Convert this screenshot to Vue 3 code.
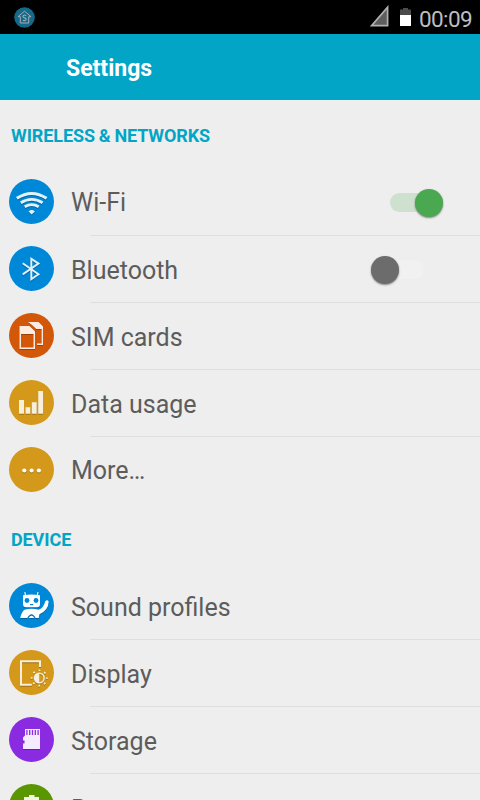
<script setup>
const sections = [
  {
    title: 'WIRELESS & NETWORKS',
    rows: [
      { label: 'Wi-Fi', icon: 'wifi', tone: 'blue', toggle: 'on', place: 'raised' },
      { label: 'Bluetooth', icon: 'bluetooth', tone: 'blue', toggle: 'off' },
      { label: 'SIM cards', icon: 'sim', tone: 'orange' },
      { label: 'Data usage', icon: 'data', tone: 'gold' },
      { label: 'More…', icon: 'more', tone: 'gold', place: 'raised' },
    ],
  },
  {
    title: 'DEVICE',
    rows: [
      { label: 'Sound profiles', icon: 'sound', tone: 'blue' },
      { label: 'Display', icon: 'display', tone: 'gold' },
      { label: 'Storage', icon: 'storage', tone: 'purple' },
      { label: 'Battery', icon: 'battery', tone: 'green', place: 'lowered' },
    ],
  },
]
</script>

<template>
  <div class="screen">
    <div class="status">
      <svg class="home" width="21" height="21" viewBox="0 0 21 21">
        <circle cx="10.5" cy="10.5" r="10.3" fill="#15698a" />
        <path d="M4 9.7 10.5 4.2 17 9.7H14.7V16H6.3V9.7Z" fill="none" stroke="#a3adb0" stroke-width="1" />
        <path d="M12.2 8.6Q10.5 7.4 9.3 8.6T10.5 10.8 11.8 13 9 13.2" fill="none" stroke="#a3adb0" stroke-width="1.1" />
      </svg>
      <span class="fill"></span>
      <svg class="signal" width="21" height="22" viewBox="0 0 21 22">
        <path d="M18.6 2.2V20.6H2.6Z" fill="#5e5e5e" stroke="#b0b0b0" stroke-width="1.7" />
      </svg>
      <svg class="cell" width="11" height="18" viewBox="0 0 11 18">
        <path d="M3 0H8V1.5H11V7H0V1.5H3Z" fill="#4b4b4b" />
        <path d="M0 7H11V18H0Z" fill="#fff" />
      </svg>
      <span class="clock">00:09</span>
    </div>
    <header class="bar">Settings</header>
    <section v-for="s in sections" :key="s.title">
      <h2>{{ s.title }}</h2>
      <div v-for="r in s.rows" :key="r.label" class="row">
        <svg class="icon" :class="r.tone" width="45" height="45" viewBox="0 0 45 45">
          <circle class="disc" cx="22.5" cy="22.5" r="22.5" />
          <g v-if="r.icon === 'wifi'" class="art" fill="none" stroke="#e3f1fa">
            <path d="M7.8 19.3Q22.7 9.6 37.6 19.3" stroke-width="3" />
            <path d="M11.8 23.8Q22.7 16.8 33.6 23.8" stroke-width="2.8" />
            <path d="M15.7 27.8Q22.7 23.3 29.7 27.8" stroke-width="2.8" />
            <path d="M19.6 32.4Q22.7 29.8 25.8 32.4L22.7 35.4Z" fill="#e3f1fa" stroke="none" />
          </g>
          <g v-else-if="r.icon === 'bluetooth'" class="art" fill="none" stroke="#e3f1fa">
            <path d="M13.7 17.2 29.5 28.2 22.3 33.2V12.8L29.5 17.6 13.7 28.4" stroke-width="1.9" />
          </g>
          <g v-else-if="r.icon === 'sim'" class="art" fill="#fdebe0">
            <path d="M19 9H29.5L34 13.5V32H28V30.5H32.6V16H27.2L23 12Z" />
            <path d="M20.6 11.5 26.8 17.5" fill="none" stroke="#d35708" stroke-width="1.2" />
            <path fill-rule="evenodd" d="M10.5 13H20.6L26 18.2V36H10.5ZM12 21V34.5H24.5V21Z" />
          </g>
          <g v-else-if="r.icon === 'data'" class="art" fill="#f7eedb">
            <path d="M10 20H15V33.7H10ZM16.5 27.3H21.3V33.7H16.5ZM22.8 22.3H27.7V33.7H22.8ZM29.2 11H34V33.7H29.2Z" />
          </g>
          <g v-else-if="r.icon === 'more'" class="art" fill="#fff">
            <circle cx="15.3" cy="23.5" r="2.1" />
            <circle cx="22.6" cy="23.5" r="2.1" />
            <circle cx="29.9" cy="23.5" r="2.1" />
          </g>
          <g v-else-if="r.icon === 'sound'" class="art" fill="#fff">
            <path d="M16.6 13 15.8 9.2M28.2 13 29 9.2" stroke="#fff" stroke-width="1.2" />
            <path d="M14 12.2Q22.5 11 31 12.2V21Q31 24.2 28 24.2H17Q14 24.2 14 21Z" />
            <path d="M11.2 35Q12.5 29 15.5 26.8 22.5 24.9 29.5 26.8 34.5 25.5 36.3 18.3Q38.2 16.2 39.7 18.5 39.3 27.5 30.4 31.3L29.7 35H26.6Q22.5 27.5 18.3 35Z" />
            <path d="M19.7 35Q22.5 30.5 25.3 35Z" />
            <g fill="#0088d8">
              <circle cx="18" cy="17.5" r="2.4" />
              <circle cx="27" cy="17.5" r="2.4" />
              <path d="M21 21H24.2V22.2H21Z" />
            </g>
          </g>
          <g v-else-if="r.icon === 'display'" class="art" fill="none" stroke="#f7eedb">
            <path d="M31 17V11.2H12V34.8H22.8" stroke-width="2" />
            <circle cx="30.3" cy="28" r="4.8" stroke-width="1.5" />
            <path d="M30.3 23.2A4.8 4.8 0 0 0 30.3 32.8Z" fill="#f7eedb" stroke="none" />
            <circle cx="30.3" cy="28" r="7.6" stroke-width="1.7" stroke-dasharray="1.7 4.269" stroke-dashoffset=".85" />
          </g>
          <g v-else-if="r.icon === 'storage'" class="art" fill="#f5ebff">
            <path d="M16 12H31V32H14V26.5H15.5V23.5H14V20.5L16 18.5Z" />
            <path d="M17.9 13V18M20.7 13V18M23.5 13V18M26.3 13V18M29.1 13V18" stroke="#8a2be2" stroke-width="1.3" />
          </g>
          <g v-else class="art" fill="#eef5e3">
            <path d="M20 11H25.5V13H30V35H15V13H20Z" />
          </g>
        </svg>
        <div class="body">
          <span class="label" :class="r.place">{{ r.label }}</span>
          <span v-if="r.toggle" class="switch" :class="r.toggle"><i class="thumb"></i></span>
        </div>
      </div>
    </section>
  </div>
</template>

<style>
body {
  overflow: hidden;
}
</style>

<style scoped>
.screen {
  width: 480px;
  height: 800px;
  overflow: hidden;
  background: #eee;
  font-family: Roboto, sans-serif;
}
.status {
  display: flex;
  height: 34px;
  padding: 0 8px 0 14px;
  box-sizing: border-box;
  background: #000;
}
.home {
  margin-top: 7px;
}
.fill {
  flex: 1;
}
.signal {
  margin-top: 5px;
}
.cell {
  margin: 8px 8px 0 10px;
}
.clock {
  width: 53px;
  color: #bebebe;
  font-size: 22.5px;
  letter-spacing: -0.6px;
  line-height: 38px;
}
.bar {
  height: 66px;
  padding-left: 66px;
  box-sizing: border-box;
  background: #02a5c6;
  color: #fff;
  font-size: 23px;
  font-weight: 700;
  line-height: 70px;
}
h2 {
  height: 69px;
  margin: 0;
  padding-left: 11px;
  color: #02a5c6;
  font-size: 18px;
  font-weight: 700;
  letter-spacing: -0.1px;
  word-spacing: -0.5px;
  line-height: 72px;
}
.row {
  display: flex;
  height: 67px;
}
.icon {
  flex: none;
  margin: 10px 17px 0 9px;
}
.blue { fill: #0088d8; }
.orange { fill: #d35708; }
.gold { fill: #d4981b; }
.purple { fill: #8a2be2; }
.green { fill: #5a9600; }
.art {
  filter: drop-shadow(0.5px 1px 0.5px rgba(0, 0, 0, 0.25));
}
.body {
  display: flex;
  flex: 1;
  justify-content: space-between;
  background: linear-gradient(#dedede, #dedede) 19px 66px / 100% 1px no-repeat;
}
.row:last-child .body {
  background: none;
}
.label {
  color: #5c5c5c;
  font-size: 25px;
  line-height: 70px;
}
.raised {
  line-height: 68px;
}
.lowered {
  line-height: 72px;
}
.switch {
  display: flex;
  align-items: center;
  width: 53px;
  height: 19px;
  margin-top: 24px;
  border-radius: 10px;
}
.on {
  margin-right: 37px;
  justify-content: flex-end;
  background: #cde1ce;
}
.off {
  margin-right: 56px;
  background: #f1f1f1;
}
.thumb {
  width: 28px;
  height: 28px;
  border-radius: 50%;
  box-shadow: 0 1px 2px rgba(0, 0, 0, 0.45);
}
.on .thumb {
  background: #4aa850;
}
.off .thumb {
  background: #6c6c6c;
}
</style>
